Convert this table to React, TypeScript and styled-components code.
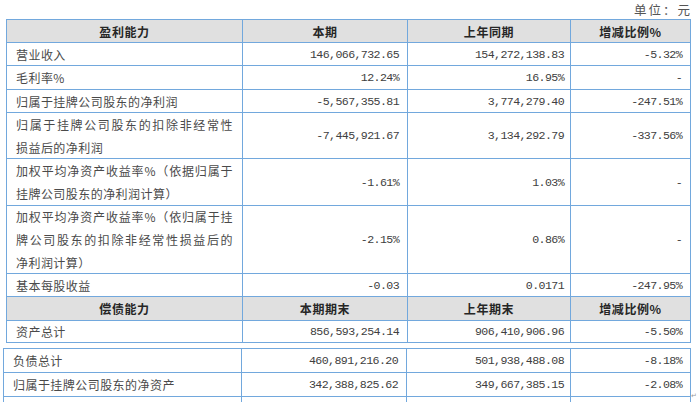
import React from "react";
import styled, { createGlobalStyle } from "styled-components";

const GlobalStyle = createGlobalStyle`
  html, body {
    margin: 0;
    padding: 0;
    background: #ffffff;
    overflow: hidden;
  }
  * { box-sizing: border-box; }
`;

const BORDER = "#72a8dd";
const CJK = `"Noto Sans CJK SC", "Noto Sans", sans-serif`;
const MONO = `"Liberation Mono", "DejaVu Sans Mono", monospace`;

type HeadRow = { kind: "head"; h: number; cells: string[] };
type DataRow = {
  kind: "data";
  h: number;
  label: string[];
  fill?: number;
  cur: string;
  prev: string;
  change: string;
};
type Row = HeadRow | DataRow;

const profitRows: Row[] = [
  { kind: "head", h: 23, cells: ["盈利能力", "本期", "上年同期", "增减比例%"] },
  { kind: "data", h: 23, label: ["营业收入"], cur: "146,066,732.65", prev: "154,272,138.83", change: "-5.32%" },
  { kind: "data", h: 24, label: ["毛利率%"], cur: "12.24%", prev: "16.95%", change: "-" },
  { kind: "data", h: 23, label: ["归属于挂牌公司股东的净利润"], cur: "-5,567,355.81", prev: "3,774,279.40", change: "-247.51%" },
  {
    kind: "data",
    h: 46,
    label: ["归属于挂牌公司股东的扣除非经常性", "损益后的净利润"],
    fill: 1,
    cur: "-7,445,921.67",
    prev: "3,134,292.79",
    change: "-337.56%",
  },
  {
    kind: "data",
    h: 47,
    label: ["加权平均净资产收益率%（依据归属于", "挂牌公司股东的净利润计算）"],
    fill: 1,
    cur: "-1.61%",
    prev: "1.03%",
    change: "-",
  },
  {
    kind: "data",
    h: 68,
    label: ["加权平均净资产收益率%（依归属于挂", "牌公司股东的扣除非经常性损益后的", "净利润计算）"],
    fill: 2,
    cur: "-2.15%",
    prev: "0.86%",
    change: "-",
  },
  { kind: "data", h: 23, label: ["基本每股收益"], cur: "-0.03", prev: "0.0171", change: "-247.95%" },
  { kind: "head", h: 24, cells: ["偿债能力", "本期期末", "上年期末", "增减比例%"] },
  { kind: "data", h: 22, label: ["资产总计"], cur: "856,593,254.14", prev: "906,410,906.96", change: "-5.50%" },
];

const debtRows: Row[] = [
  { kind: "data", h: 24, label: ["负债总计"], cur: "460,891,216.20", prev: "501,938,488.08", change: "-8.18%" },
  { kind: "data", h: 24, label: ["归属于挂牌公司股东的净资产"], cur: "342,388,825.62", prev: "349,667,385.15", change: "-2.08%" },
  { kind: "data", h: 24, label: [""], cur: "", prev: "", change: "" },
];

const Page = styled.div`
  width: 697px;
  height: 402px;
  overflow: hidden;
  display: flex;
  flex-direction: column;
`;

const UnitBar = styled.div`
  height: 20px;
  display: flex;
  justify-content: flex-end;
  align-items: center;
  padding-right: 5px;
  font-family: ${CJK};
  font-size: 12.5px;
  letter-spacing: 2px;
  color: #555555;
`;

const SheetWrap = styled.div<{ $x: number; $gap: number }>`
  position: relative;
  margin-left: ${(p) => p.$x}px;
  margin-top: ${(p) => p.$gap}px;
  width: max-content;
`;

const Sheet = styled.div<{ $cols: string; $rows: string }>`
  display: grid;
  grid-template-columns: ${(p) => p.$cols};
  grid-template-rows: ${(p) => p.$rows};
  border-top: 1px solid ${BORDER};
  border-left: 1px solid ${BORDER};
`;

const Cell = styled.div`
  min-width: 0;
  border-right: 1px solid ${BORDER};
  border-bottom: 1px solid ${BORDER};
  display: flex;
  align-items: center;
  overflow: hidden;
`;

const HeadCell = styled(Cell)`
  background: #e0e0e0;
  justify-content: center;
  font-family: ${CJK};
  font-weight: 700;
  font-size: 12px;
  letter-spacing: 0.6px;
  color: #262626;
`;

const LabelCell = styled(Cell)`
  padding: 0 9px 0 9px;
  font-family: ${CJK};
  font-size: 12px;
  letter-spacing: 0.45px;
  color: #4a4a4a;
`;

const LabelText = styled.div`
  width: 100%;
`;

const Line = styled.div<{ $fill: boolean }>`
  white-space: nowrap;
  line-height: 23px;
  text-align: ${(p) => (p.$fill ? "justify" : "left")};
  text-align-last: ${(p) => (p.$fill ? "justify" : "auto")};
  text-justify: inter-character;
`;

const NumCell = styled(Cell)<{ $pad: number }>`
  justify-content: flex-end;
  padding-right: ${(p) => p.$pad}px;
  font-family: ${MONO};
  font-size: 11.6px;
  letter-spacing: -0.6px;
  color: #404040;
`;

const ReturnMark = styled.span`
  position: absolute;
  right: -6px;
  bottom: 22px;
  font-family: ${CJK};
  font-size: 7px;
  color: #9a9a9a;
  line-height: 7px;
`;

function SheetRows({ rows }: { rows: Row[] }) {
  return (
    <>
      {rows.map((r, i) =>
        r.kind === "head" ? (
          <React.Fragment key={i}>
            {r.cells.map((c, j) => (
              <HeadCell key={j}>{c}</HeadCell>
            ))}
          </React.Fragment>
        ) : (
          <React.Fragment key={i}>
            <LabelCell>
              <LabelText>
                {r.label.map((l, k) => (
                  <Line key={k} $fill={k < (r.fill ?? 0)}>
                    {l}
                  </Line>
                ))}
              </LabelText>
            </LabelCell>
            <NumCell $pad={8}>{r.cur}</NumCell>
            <NumCell $pad={6}>{r.prev}</NumCell>
            <NumCell $pad={8}>{r.change}</NumCell>
          </React.Fragment>
        )
      )}
    </>
  );
}

const tracks = (rows: Row[]) => rows.map((r) => `${r.h}px`).join(" ");

export default function App() {
  return (
    <>
      <GlobalStyle />
      <Page>
        <UnitBar>单位：元</UnitBar>
        <SheetWrap $x={6} $gap={0}>
          <Sheet $cols="236px 165px 163px 120px" $rows={tracks(profitRows)}>
            <SheetRows rows={profitRows} />
          </Sheet>
        </SheetWrap>
        <SheetWrap $x={3} $gap={5}>
          <Sheet $cols="238px 165px 164px 120px" $rows={tracks(debtRows)}>
            <SheetRows rows={debtRows} />
          </Sheet>
          <ReturnMark>↵</ReturnMark>
        </SheetWrap>
      </Page>
    </>
  );
}
